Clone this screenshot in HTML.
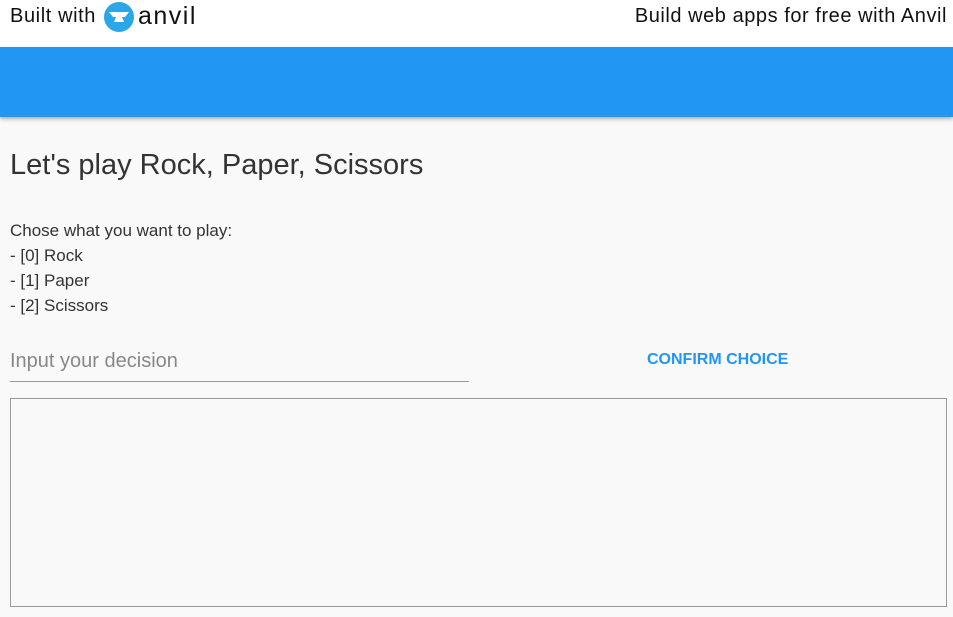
<!DOCTYPE html>
<html><head><style>
body{margin:0;width:953px;height:617px;background:#f9f9f9;font-family:"Liberation Sans",sans-serif;overflow:hidden;position:relative}
.top{position:absolute;left:0;top:0;width:953px;height:47px;background:#fff}
.blue{position:absolute;left:0;top:47px;width:953px;height:70px;background:#2196f3;box-shadow:0 2px 4px rgba(0,0,0,.3)}
.t{position:absolute;white-space:nowrap}
</style></head><body>
<div class="top"></div>
<div class="t" style="left:10px;top:5px;font-size:20px;letter-spacing:0.6px;color:#111">Built with</div>
<svg style="position:absolute;left:103px;top:1px" width="110" height="32">
<circle cx="16" cy="16" r="15" fill="#2aa7e8"/>
<path d="M6 11h20l-4 5h-3l2 5h-10l2-5h-3z" fill="#fff"/>
<text x="35" y="23" font-size="25" letter-spacing="1.5" font-family="Liberation Sans" fill="#111">anvil</text>
</svg>
<div class="t" style="right:6px;top:5px;font-size:20px;letter-spacing:0.55px;color:#111">Build web apps for free with Anvil</div>
<div class="blue"></div>
<div class="t" style="left:10px;top:149px;font-size:29px;color:#333">Let's play Rock, Paper, Scissors</div>
<div class="t" style="left:10px;top:218px;font-size:17px;line-height:25px;color:#333">Chose what you want to play:<br>- [0] Rock<br>- [1] Paper<br>- [2] Scissors</div>
<div class="t" style="left:10px;top:350px;font-size:20px;color:#888">Input your decision</div>
<div style="position:absolute;left:10px;top:381px;width:459px;height:1px;background:#999"></div>
<div class="t" style="left:647px;top:351px;font-size:16px;font-weight:bold;color:#2196f3">CONFIRM CHOICE</div>
<div style="position:absolute;left:10px;top:398px;width:935px;height:207px;border:1px solid #999"></div>
</body></html>
